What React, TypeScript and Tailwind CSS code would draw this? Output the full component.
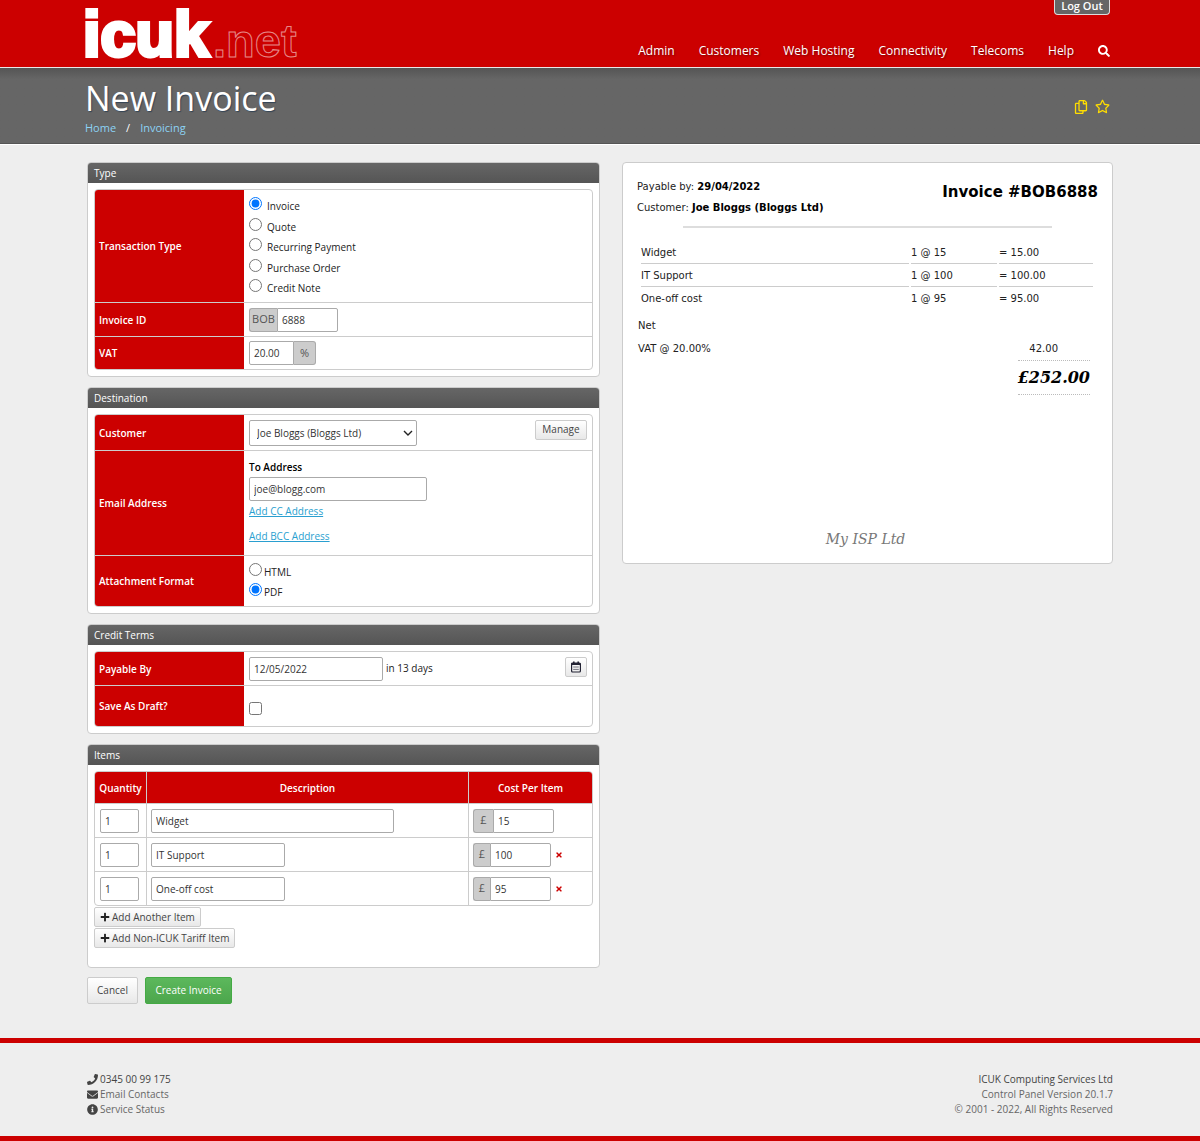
import type { ReactNode } from 'react'
import { FaSearch, FaRegCopy, FaRegStar, FaPlus, FaTimes, FaPhone, FaEnvelope, FaInfoCircle } from 'react-icons/fa'

const NAV_LINKS = ['Admin', 'Customers', 'Web Hosting', 'Connectivity', 'Telecoms', 'Help']

const TRANSACTION_TYPES = ['Invoice', 'Quote', 'Recurring Payment', 'Purchase Order', 'Credit Note']

const ITEMS = [
  { qty: 1, name: 'Widget', cost: 15, total: '15.00' },
  { qty: 1, name: 'IT Support', cost: 100, total: '100.00' },
  { qty: 1, name: 'One-off cost', cost: 95, total: '95.00' },
]

const INPUT = 'h-6 bg-white border border-[#aaa] rounded-[2px] px-1 text-[10px] text-[#333] outline-none'
const ADDON = 'h-6 flex items-center justify-center bg-[#ccc] border border-[#aaa] text-[11px] text-[#555]'
const SMALL_BUTTON = 'inline-flex items-center justify-center h-5 border border-[#ccc] rounded-[2px] bg-linear-to-b from-white to-[#e8e8e8] text-[10px] text-[#444] cursor-pointer'

function Logo() {
  return (
    <a href="#" aria-label="icuk.net" className="block">
      <svg width="216" height="67" viewBox="0 0 216 67" className="block overflow-visible" fontFamily="Liberation Sans, sans-serif" fontWeight="700">
        <text x="-2" y="56" fontSize="63" fill="#fff" stroke="#fff" strokeWidth="4">icuk</text>
        <text x="128" y="57" fontSize="47" fill="none" stroke="#fff" strokeOpacity="0.55" strokeWidth="1">.net</text>
      </svg>
    </a>
  )
}

function Header() {
  return (
    <header className="bg-[#c00] border-b border-[#e8e8e8]">
      <div className="max-w-[1030px] mx-auto h-[67px] flex justify-between">
        <Logo />
        <div className="flex flex-col items-end justify-between pr-[5px]">
          <button className="w-14 pb-[3px] bg-[#666] border border-t-0 border-[#ddd] rounded-b-[4px] text-[11px] leading-[11px] font-semibold text-white cursor-pointer">
            Log Out
          </button>
          <nav className="flex items-center gap-6 h-5 mb-[6px]">
            {NAV_LINKS.map(link => (
              <a key={link} href="#" className="text-[12px] text-white font-medium text-shadow-[1px_1px_2px_#0006]">{link}</a>
            ))}
            <a href="#" aria-label="Search" className="text-white">
              <FaSearch className="text-[12px]" />
            </a>
          </nav>
        </div>
      </div>
    </header>
  )
}

function TitleBar() {
  return (
    <div className="bg-linear-to-b from-[#555] via-[#666] via-15% to-[#666] border-b border-[#555]">
      <div className="max-w-[1030px] mx-auto h-[75px] flex items-center justify-between">
        <div className="pt-[2px]">
          <h1 className="text-[34px] leading-[42px] text-white text-shadow-[1px_1px_1px_#345]">New Invoice</h1>
          <nav aria-label="Breadcrumb" className="flex gap-[10px] text-[11px] leading-[18px] text-[#8cd3f5]">
            <a href="#">Home</a>
            <span className="text-white">/</span>
            <a href="#">Invoicing</a>
          </nav>
        </div>
        <div className="flex items-center gap-[7px] pr-[5px] pt-[2px] text-[#fd0]">
          <button aria-label="Copy" className="cursor-pointer"><FaRegCopy className="text-[14px]" /></button>
          <button aria-label="Favourite" className="cursor-pointer"><FaRegStar className="text-[15px]" /></button>
        </div>
      </div>
    </div>
  )
}

function Panel({ title, children }: { title: string; children: ReactNode }) {
  return (
    <section className="bg-white border border-[#ccc] rounded-[4px] overflow-hidden">
      <h2 className="h-5 px-[6px] bg-linear-to-b from-[#666] to-[#555] text-[10px] leading-5 text-white">{title}</h2>
      <div className="p-[6px]">{children}</div>
    </section>
  )
}

function FormTable({ children }: { children: ReactNode }) {
  return (
    <div className="border border-[#ccc] rounded-[4px] overflow-hidden">
      <table className="w-full border-separate border-spacing-0">
        <tbody>{children}</tbody>
      </table>
    </div>
  )
}

function FormRow({ label, height, last, children }: { label: string; height: string; last?: boolean; children: ReactNode }) {
  const border = last ? '' : 'border-b border-[#ccc]'
  return (
    <tr>
      <th scope="row" className={`w-[149px] ${height} px-1 pt-px bg-[#c00] text-left text-[10px] font-semibold text-white ${border}`}>{label}</th>
      <td className={`px-[5px] ${border}`}>{children}</td>
    </tr>
  )
}

function Radio({ name, label, checked, gap }: { name: string; label: string; checked?: boolean; gap: string }) {
  return (
    <label className={`flex items-start h-5 text-[10px] leading-[22px] ${gap}`}>
      <input type="radio" name={name} defaultChecked={checked} className="size-[13px] mt-[2px]" />
      {label}
    </label>
  )
}

function CalendarIcon() {
  return (
    <svg width="12" height="12" viewBox="0 0 12 12" fill="none" stroke="#223" strokeWidth="1.2">
      <rect x="1.6" y="2" width="8.8" height="9" rx="1" />
      <path d="M1.6 3h8.8" strokeWidth="2" />
      <path d="M3.8 0.5v2M8.2 0.5v2" strokeWidth="1.6" />
      <path d="M3.2 6h5.6M3.2 8.4h5.6" strokeWidth="1" strokeOpacity="0.6" />
    </svg>
  )
}

function TypePanel() {
  return (
    <Panel title="Type">
      <FormTable>
        <FormRow label="Transaction Type" height="h-[113px]">
          <div className="flex flex-col justify-between h-[102px]">
            {TRANSACTION_TYPES.map((type, i) => (
              <Radio key={type} name="transaction" label={type} checked={i === 0} gap="gap-[5px]" />
            ))}
          </div>
        </FormRow>
        <FormRow label="Invoice ID" height="h-[34px]">
          <div className="flex">
            <span className={`${ADDON} w-7 rounded-l-[3px] border-r-0`}>BOB</span>
            <input aria-label="Invoice ID" defaultValue="6888" className={`${INPUT} w-[61px] rounded-l-none`} />
          </div>
        </FormRow>
        <FormRow label="VAT" height="h-8" last>
          <div className="flex">
            <input aria-label="VAT" defaultValue="20.00" className={`${INPUT} w-[45px] rounded-r-none`} />
            <span className={`${ADDON} w-[22px] rounded-r-[3px] border-l-0`}>%</span>
          </div>
        </FormRow>
      </FormTable>
    </Panel>
  )
}

function DestinationPanel() {
  return (
    <Panel title="Destination">
      <FormTable>
        <FormRow label="Customer" height="h-9">
          <div className="flex items-start justify-between">
            <div className="relative">
              <select aria-label="Customer" className="appearance-none block h-[26px] w-[168px] pl-[7px] pt-px bg-white border border-[#aaa] rounded-[2px] text-[10px] text-[#333]">
                <option>Joe Bloggs (Bloggs Ltd)</option>
              </select>
              <svg width="10" height="6" viewBox="0 0 10 6" className="absolute right-1 top-[10px] pointer-events-none" fill="none" stroke="#222" strokeWidth="1.4">
                <path d="M1 1l4 4 4-4" />
              </svg>
            </div>
            <button className={`${SMALL_BUTTON} w-[52px]`}>Manage</button>
          </div>
        </FormRow>
        <FormRow label="Email Address" height="h-[105px]">
          <div className="flex flex-col items-start pb-1 text-[10px] leading-5">
            <label htmlFor="to" className="font-semibold text-black">To Address</label>
            <input id="to" defaultValue="joe@blogg.com" className={`${INPUT} w-[178px]`} />
            <a href="#" className="text-[#2a9fd0] underline">Add CC Address</a>
            <a href="#" className="mt-[5px] text-[#2a9fd0] underline">Add BCC Address</a>
          </div>
        </FormRow>
        <FormRow label="Attachment Format" height="h-[50px]" last>
          <Radio name="format" label="HTML" gap="gap-[2px]" />
          <Radio name="format" label="PDF" checked gap="gap-[2px]" />
        </FormRow>
      </FormTable>
    </Panel>
  )
}

function CreditPanel() {
  return (
    <Panel title="Credit Terms">
      <FormTable>
        <FormRow label="Payable By" height="h-[34px]">
          <div className="flex items-center gap-[3px] text-[10px]">
            <input aria-label="Payable By" defaultValue="12/05/2022" className={`${INPUT} w-[134px]`} />
            <span>in 13 days</span>
            <button aria-label="Pick a date" className={`${SMALL_BUTTON} w-[22px] ml-auto self-start`}>
              <CalendarIcon />
            </button>
          </div>
        </FormRow>
        <FormRow label="Save As Draft?" height="h-10" last>
          <input type="checkbox" aria-label="Save As Draft?" className="block size-[13px] mt-1" />
        </FormRow>
      </FormTable>
    </Panel>
  )
}

function ItemsPanel() {
  return (
    <Panel title="Items">
      <div className="border border-[#ccc] rounded-[4px] overflow-hidden">
        <table className="w-full border-separate border-spacing-0 text-[10px]">
          <thead>
            <tr className="h-[31px] bg-[#c00] text-white">
              <th className="w-[52px] pt-[2px] font-semibold border-r border-[#ccc]">Quantity</th>
              <th className="pt-[2px] font-semibold border-r border-[#ccc]">Description</th>
              <th className="w-[123px] pt-[2px] font-semibold">Cost Per Item</th>
            </tr>
          </thead>
          <tbody>
            {ITEMS.map((item, i) => (
              <tr key={item.name} className="h-[34px]">
                <td className="pl-[5px] border-t border-r border-[#ccc]">
                  <input aria-label="Quantity" defaultValue={item.qty} className={`${INPUT} w-[39px] block`} />
                </td>
                <td className="pl-1 border-t border-r border-[#ccc]">
                  <input aria-label="Description" defaultValue={item.name} className={`${INPUT} block ${i === 0 ? 'w-[243px]' : 'w-[134px]'}`} />
                </td>
                <td className="pl-1 border-t border-[#ccc]">
                  <div className="flex items-center">
                    <span className={`${ADDON} rounded-l-[3px] border-r-0 ${i === 0 ? 'w-5' : 'w-[17px]'}`}>£</span>
                    <input aria-label="Cost" defaultValue={item.cost} className={`${INPUT} rounded-l-none w-[61px]`} />
                    {i > 0 && (
                      <button aria-label={`Remove ${item.name}`} className="ml-1 text-[#c00] cursor-pointer">
                        <FaTimes className="text-[8px]" />
                      </button>
                    )}
                  </div>
                </td>
              </tr>
            ))}
          </tbody>
        </table>
      </div>
      <div className="flex flex-col items-start gap-px pt-px pb-[13px]">
        <button className={`${SMALL_BUTTON} px-[5px] gap-[2px]`}><FaPlus className="text-[10px] text-[#222]" />Add Another Item</button>
        <button className={`${SMALL_BUTTON} px-[5px] gap-[2px]`}><FaPlus className="text-[10px] text-[#222]" />Add Non-ICUK Tariff Item</button>
      </div>
    </Panel>
  )
}

function InvoicePreview() {
  return (
    <section className="bg-white border border-[#ccc] rounded-[4px] h-[402px] px-[14px] pt-[13px] flex flex-col font-['DejaVu_Sans',sans-serif] text-[10px] text-[#222]">
      <div className="flex justify-between">
        <div className="leading-[21px]">
          <p>Payable by: <b className="text-black">29/04/2022</b></p>
          <p>Customer: <b className="text-black">Joe Bloggs (Bloggs Ltd)</b></p>
        </div>
        <h2 className="text-[15px] leading-[32px] font-bold text-black">Invoice #BOB6888</h2>
      </div>
      <hr className="w-4/5 mx-auto mt-2 mb-[13px] border-t-2 border-[#ddd]" />
      <div className="pl-[2px] pr-[3px]">
        <table className="w-full border-separate border-spacing-x-[2px] border-spacing-y-0">
          <tbody>
            {ITEMS.map((item, i) => (
              <tr key={item.name} className="h-[23px]">
                <td className={i < 2 ? 'border-b border-[#ccc]' : ''}>{item.name}</td>
                <td className={`w-[86px] ${i < 2 ? 'border-b border-[#ccc]' : ''}`}>{item.qty} @ {item.cost}</td>
                <td className={`w-[94px] ${i < 2 ? 'border-b border-[#ccc]' : ''}`}>= {item.total}</td>
              </tr>
            ))}
          </tbody>
        </table>
      </div>
      <div className="px-px pt-1 leading-[23px]">
        <p>Net</p>
        <div className="flex justify-between">
          <span>VAT @ 20.00%</span>
          <span className="pr-[39px]">42.00</span>
        </div>
      </div>
      <p className="self-end mr-2 border-y border-dotted border-[#bbb] font-['Georgia','DejaVu_Serif',serif] text-[16px] leading-[33px] font-bold italic text-black">£252.00</p>
      <p className="mt-auto mb-3 pr-1 text-center font-['DejaVu_Serif',serif] text-[14px] leading-6 italic text-[#777]">My ISP Ltd</p>
    </section>
  )
}

function Footer() {
  return (
    <footer className="border-y-[5px] border-[#c00]">
      <div className="max-w-[1026px] mx-auto pt-[29px] pb-[19px] flex justify-between text-[10px] leading-[15px] text-[#666]">
        <ul>
          <li className="flex items-center gap-[2px] text-[#444]"><FaPhone className="text-[11px]" />0345 00 99 175</li>
          <li><a href="#" className="flex items-center gap-[2px]"><FaEnvelope className="text-[11px] text-[#444]" />Email Contacts</a></li>
          <li><a href="#" className="flex items-center gap-[2px]"><FaInfoCircle className="text-[11px] text-[#444]" />Service Status</a></li>
        </ul>
        <div className="text-right">
          <p className="text-[#444] font-medium">ICUK Computing Services Ltd</p>
          <p>Control Panel Version 20.1.7</p>
          <p>© 2001 - 2022, All Rights Reserved</p>
        </div>
      </div>
    </footer>
  )
}

export default function App() {
  return (
    <div className="bg-[#eee] min-h-screen font-['Open_Sans',sans-serif] text-[#222]">
      <Header />
      <TitleBar />
      <main className="border-t border-white">
        <div className="max-w-[1026px] mx-auto pt-[17px] pb-[34px]">
          <div className="grid grid-cols-[513fr_491fr] gap-[22px] items-start">
            <div className="flex flex-col gap-[10px]">
              <TypePanel />
              <DestinationPanel />
              <CreditPanel />
              <ItemsPanel />
            </div>
            <InvoicePreview />
          </div>
          <div className="flex gap-[7px] mt-[9px]">
            <button className="h-[27px] w-[51px] border border-[#ccc] rounded-[2px] bg-linear-to-b from-white to-[#e8e8e8] text-[10px] text-[#444] cursor-pointer">Cancel</button>
            <button className="h-[27px] w-[87px] border border-[#4a4] rounded-[2px] bg-linear-to-b from-[#5cb85c] to-[#4ca64c] text-[10px] text-white cursor-pointer">Create Invoice</button>
          </div>
        </div>
      </main>
      <Footer />
    </div>
  )
}
